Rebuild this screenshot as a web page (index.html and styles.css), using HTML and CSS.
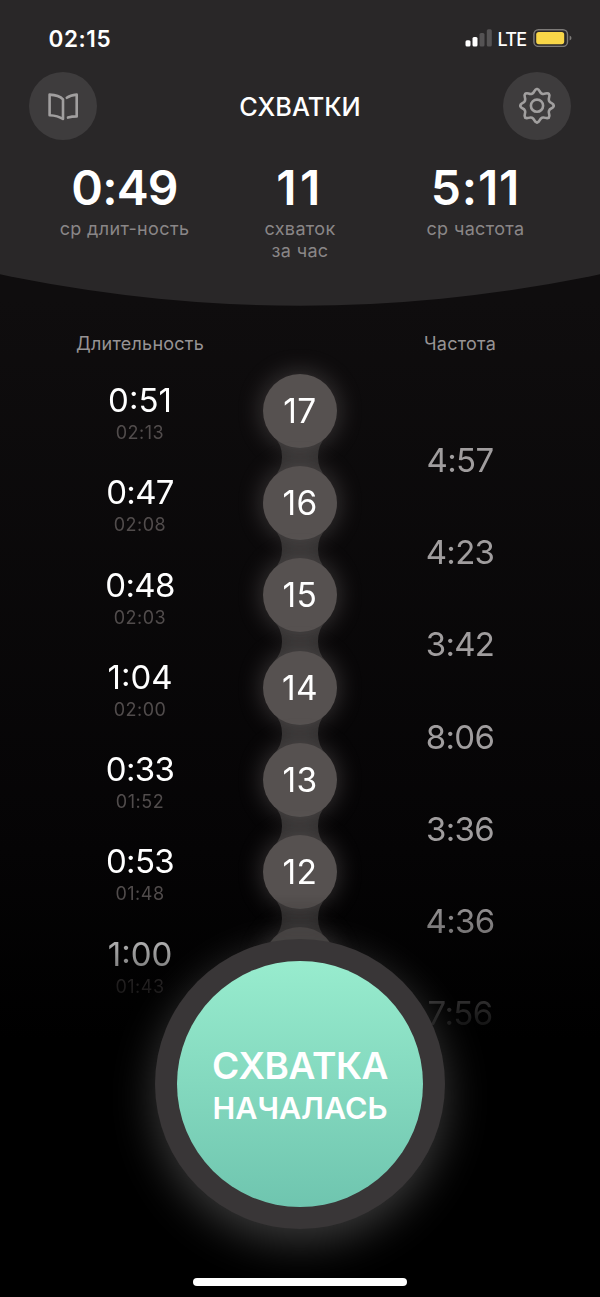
FILE: index.html
```html
<!DOCTYPE html>
<html lang="ru">
<head>
<meta charset="utf-8">
<title>Схватки</title>
<link rel="stylesheet" href="styles.css">
</head>
<body>
<div class="screen">
  <header class="header">
    <div class="status">
      <span class="clock">02:15</span>
      <div class="status-right">
        <svg class="signal" width="28" height="18" viewBox="0 0 28 18">
          <rect x="0.5" y="11.2" width="5" height="6.3" rx="1.5" fill="#fff"/>
          <rect x="7.5" y="8" width="5" height="9.5" rx="1.5" fill="#fff"/>
          <rect x="14.5" y="4" width="5" height="13.5" rx="1.5" fill="#555354"/>
          <rect x="21.8" y="0.3" width="5" height="17.2" rx="1.5" fill="#555354"/>
        </svg>
        <span class="network">LTE</span>
        <svg class="battery" width="40" height="18" viewBox="0 0 40 18">
          <rect x="1.9" y="0.8" width="33.6" height="16.6" rx="4.5" fill="none" stroke="#7c7a78" stroke-width="1.4"/>
          <rect x="4.2" y="3" width="28" height="12.2" rx="2.6" fill="#f8d648"/>
          <path d="M37.6 6.5 Q39.5 7.3 39.5 9 Q39.5 10.7 37.6 11.5 Z" fill="#7c7a78"/>
        </svg>
      </div>
    </div>
    <div class="navbar">
      <button class="round-btn" aria-label="Журнал">
        <svg width="68" height="68" viewBox="0 0 68 68" fill="none" stroke="#a19f9f" stroke-width="2.6" stroke-linejoin="round" stroke-linecap="round">
          <path d="M20.6 22.6 Q30 23 34 27.3 V47 Q29 43.6 20.6 43.2 Z"/>
          <path d="M37.8 25.8 Q41 23.3 47.7 22.6 V44.4 Q43 44.4 39 45.6"/>
        </svg>
      </button>
      <h1 class="title">СХВАТКИ</h1>
      <button class="round-btn" aria-label="Настройки">
        <svg width="68" height="68" viewBox="-34 -33.7 68 68" fill="none" stroke="#a19f9f" stroke-width="2.6" stroke-linecap="round">
          <defs><path id="tooth" d="M0 -16.7 C3 -16.7 2 -13.2 4.97 -12 C7.93 -10.8 9.7 -13.9 11.81 -11.81"/></defs>
          <use href="#tooth"/>
          <use href="#tooth" transform="rotate(45)"/>
          <use href="#tooth" transform="rotate(90)"/>
          <use href="#tooth" transform="rotate(135)"/>
          <use href="#tooth" transform="rotate(180)"/>
          <use href="#tooth" transform="rotate(225)"/>
          <use href="#tooth" transform="rotate(270)"/>
          <use href="#tooth" transform="rotate(315)"/>
          <circle r="6.1"/>
        </svg>
      </button>
    </div>
    <div class="stats">
      <div class="stat"><div class="stat-value tight">0:49</div><div class="stat-label">ср длит-ность</div></div>
      <div class="stat"><div class="stat-value loose">11</div><div class="stat-label">схваток<br>за час</div></div>
      <div class="stat"><div class="stat-value">5:11</div><div class="stat-label">ср частота</div></div>
    </div>
  </header>

  <div class="columns-head"><span>Длительность</span><span></span><span>Частота</span></div>

  <main class="log">
    <div class="durations">
      <div class="entry"><div class="time">0:51</div><div class="start">02:13</div></div>
      <div class="entry"><div class="time tight">0:47</div><div class="start">02:08</div></div>
      <div class="entry"><div class="time tight">0:48</div><div class="start">02:03</div></div>
      <div class="entry"><div class="time">1:04</div><div class="start">02:00</div></div>
      <div class="entry"><div class="time tight">0:33</div><div class="start">01:52</div></div>
      <div class="entry"><div class="time tight">0:53</div><div class="start">01:48</div></div>
      <div class="entry"><div class="time">1:00</div><div class="start">01:43</div></div>
    </div>
    <div class="chain">
      <div class="link"><div class="bead">17</div></div>
      <div class="link"><div class="bead">16</div></div>
      <div class="link"><div class="bead">15</div></div>
      <div class="link"><div class="bead">14</div></div>
      <div class="link"><div class="bead">13</div></div>
      <div class="link"><div class="bead">12</div></div>
      <div class="link"><div class="bead"></div></div>
    </div>
    <div class="intervals">
      <div class="interval">4:57</div>
      <div class="interval">4:23</div>
      <div class="interval">3:42</div>
      <div class="interval">8:06</div>
      <div class="interval">3:36</div>
      <div class="interval">4:36</div>
      <div class="interval">7:56</div>
    </div>
  </main>

  <button class="start-btn">
    <span class="start-face"><span class="line-big">СХВАТКА</span><span class="line-small">НАЧАЛАСЬ</span></span>
  </button>
  <div class="home-bar"></div>
</div>
</body>
</html>
```
FILE: styles.css
```css
* { box-sizing: border-box; }
body { margin: 0; background: #000; }
button { border: 0; padding: 0; font: inherit; color: inherit; }

.screen {
  position: relative;
  width: 600px;
  height: 1297px;
  overflow: hidden;
  display: flex;
  flex-direction: column;
  background: linear-gradient(#0f0d0e 300px, #050405 850px, #000 1040px);
  color: #fff;
  font-family: Inter, "Liberation Sans", sans-serif;
}

/* header with a shallow arc as its lower edge */
.header {
  flex: none;
  height: 306px;
  background: #292728;
  clip-path: circle(1444px at 300px -1138.3px);
}
.status {
  height: 72px;
  padding: 4px 28px 0 48.5px;
  display: flex;
  align-items: center;
  justify-content: space-between;
}
.clock { font-size: 22.5px; font-weight: 600; letter-spacing: 0.6px; }
.status-right { display: flex; align-items: center; }
.signal { margin-right: 5px; }
.network { font-size: 18px; font-weight: 500; width: 34.5px; letter-spacing: -0.7px; padding-top: 2px; }
.battery { display: block; }

.navbar {
  height: 68px;
  padding: 0 29px;
  display: flex;
  align-items: center;
  justify-content: space-between;
}
.round-btn { width: 68px; height: 68px; border-radius: 50%; background: #3e3c3d; }
.round-btn svg { display: block; }
.title { margin: 0; font-size: 25.3px; font-weight: 500; }

.stats {
  display: grid;
  grid-template-columns: repeat(3, 175.5px);
  justify-content: center;
  padding-top: 24px;
  text-align: center;
}
.stat-value { font-size: 48px; line-height: 48px; font-weight: 600; letter-spacing: 0.8px; }
.stat-value.tight { letter-spacing: -0.8px; }
.stat-value.loose { letter-spacing: 3.5px; }
.stat-label { font-size: 18px; line-height: 22px; letter-spacing: 0.35px; color: #8a8687; padding-top: 6px; }

.columns-head {
  flex: none;
  display: grid;
  grid-template-columns: repeat(3, 160px);
  justify-content: center;
  height: 58.4px;
  padding-top: 27px;
  font-size: 18px;
  line-height: 22px;
  letter-spacing: 0.25px;
  text-align: center;
  color: #979394;
}

/* the extra 30px above leaves room for the first bead's glow inside the mask */
.log {
  flex: none;
  height: 730px;
  margin-top: -30px;
  padding-top: 30px;
  display: grid;
  grid-template-columns: repeat(3, 160px);
  justify-content: center;
  text-align: center;
  -webkit-mask-image: linear-gradient(#000 560px, transparent 710px);
  mask-image: linear-gradient(#000 560px, transparent 710px);
}
.entry, .link, .interval { height: 92.25px; }
.entry { padding-top: 19.8px; }
.time, .interval { font-size: 33px; }
.time { line-height: 32px; }
.time.tight, .interval { letter-spacing: -0.7px; }
.start { padding-top: 1px; font-size: 18px; line-height: 32px; letter-spacing: 0.5px; color: #514c4c; }
.intervals { padding-top: 49.6px; }
.interval { line-height: 92px; color: #a09d9e; }

.chain { padding-top: 0.4px; }
.link { display: flex; flex-direction: column; align-items: center; padding-top: 9px; }
.bead {
  position: relative;
  z-index: 1;
  flex: none;
  width: 74px;
  height: 74px;
  border-radius: 50%;
  background: #565150;
  box-shadow: 0 0 26px rgba(190, 180, 180, 0.3);
  font-size: 33.5px;
  line-height: 75px;
  letter-spacing: 0.4px;
}
/* waist that joins two neighbouring beads */
.link::after {
  content: "";
  position: relative;
  flex: none;
  width: 52px;
  height: 40.25px;
  margin-top: -11px;
  background: #2c2a2a;
  clip-path: path("M0 0 Q8 8 8 20.1 Q8 32 0 40.25 H52 Q44 32 44 20.1 Q44 8 52 0 Z");
}

/* main action floats over the list */
.start-btn {
  position: absolute;
  left: 155px;
  top: 939px;
  z-index: 2;
  width: 290px;
  height: 290px;
  padding: 22px;
  border-radius: 50%;
  background: #393637;
  box-shadow: 0 13px 44px rgba(255, 255, 255, 0.23);
}
.start-face {
  width: 246px;
  height: 246px;
  border-radius: 50%;
  display: flex;
  flex-direction: column;
  align-items: center;
  justify-content: center;
  padding-top: 2px;
  background: linear-gradient(#98ecce, #6fc5af);
  font-weight: 600;
}
.line-big { font-size: 37px; line-height: 44px; letter-spacing: -0.4px; }
.line-small { font-size: 30.5px; line-height: 39px; }

.home-bar {
  position: absolute;
  left: 193px;
  bottom: 11px;
  width: 214px;
  height: 8px;
  border-radius: 4px;
  background: #fff;
}
```
